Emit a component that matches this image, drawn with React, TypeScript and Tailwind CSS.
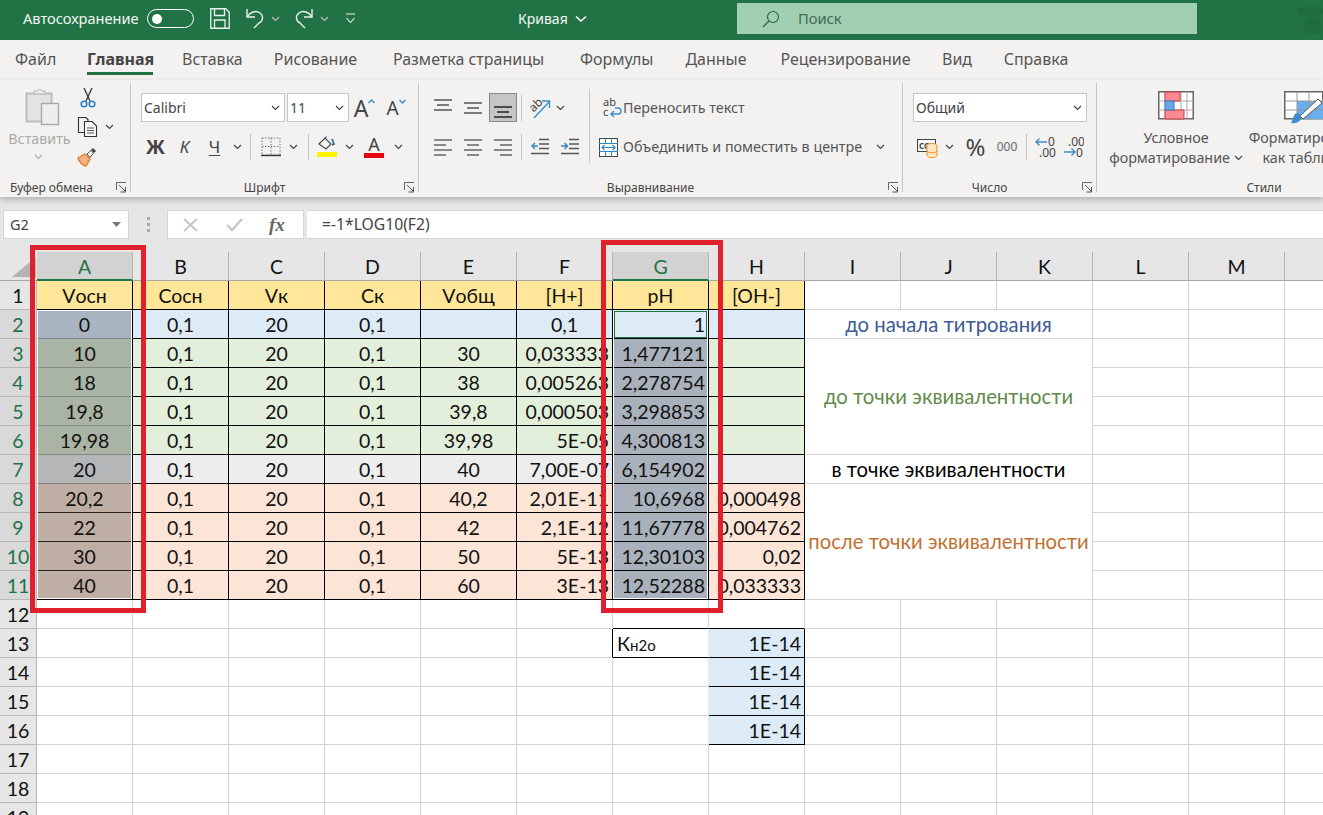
import { ReactNode } from 'react';

const tabs = [
  { label: 'Файл', w: 'w-[39px]', gap: 'ml-[15px]' },
  { label: 'Главная', w: 'w-[66px]', gap: 'ml-[33px]', active: true },
  { label: 'Вставка', w: 'w-[60px]', gap: 'ml-[29px]' },
  { label: 'Рисование', w: 'w-[85px]', gap: 'ml-[31px]' },
  { label: 'Разметка страницы', w: 'w-[153px]', gap: 'ml-[34px]' },
  { label: 'Формулы', w: 'w-[73px]', gap: 'ml-[35px]' },
  { label: 'Данные', w: 'w-[62px]', gap: 'ml-[32px]' },
  { label: 'Рецензирование', w: 'w-[133px]', gap: 'ml-[32px]' },
  { label: 'Вид', w: 'w-[30px]', gap: 'ml-[30px]' },
  { label: 'Справка', w: 'w-[66px]', gap: 'ml-[31px]' },
];

const columns = ['A', 'B', 'C', 'D', 'E', 'F', 'G', 'H', 'I', 'J', 'K', 'L', 'M', 'N'];

// values of A..H for rows 1-11, a leading '>' means right aligned
const sheet: string[][] = [
  ['Vосн', 'Сосн', 'Vк', 'Ск', 'Vобщ', '[Н+]', 'рН', '[ОН-]'],
  ['0', '0,1', '20', '0,1', '', '0,1', '>1', ''],
  ['10', '0,1', '20', '0,1', '30', '>0,033333', '>1,477121', ''],
  ['18', '0,1', '20', '0,1', '38', '>0,005263', '>2,278754', ''],
  ['19,8', '0,1', '20', '0,1', '39,8', '>0,000503', '>3,298853', ''],
  ['19,98', '0,1', '20', '0,1', '39,98', '>5E-05', '>4,300813', ''],
  ['20', '0,1', '20', '0,1', '40', '>7,00E-07', '>6,154902', ''],
  ['20,2', '0,1', '20', '0,1', '40,2', '>2,01E-11', '>10,6968', '>0,000498'],
  ['22', '0,1', '20', '0,1', '42', '>2,1E-12', '>11,67778', '>0,004762'],
  ['30', '0,1', '20', '0,1', '50', '>5E-13', '>12,30103', '>0,02'],
  ['40', '0,1', '20', '0,1', '60', '>3E-13', '>12,52288', '>0,033333'],
];

const notes: Record<number, { text: string; span: string; color: string }> = {
  2: { text: 'до начала титрования', span: 'row-span-1', color: 'text-[#3c5a94]' },
  3: { text: 'до точки эквивалентности', span: 'row-span-4', color: 'text-[#5f8a48]' },
  7: { text: 'в точке эквивалентности', span: 'row-span-1', color: 'text-black' },
  8: { text: 'после точки эквивалентности', span: 'row-span-4', color: 'text-[#c1702f]' },
};

function rowFill(row: number) {
  if (row === 1) return 'bg-[#ffe699]';
  if (row === 2) return 'bg-[#ddebf7]';
  if (row <= 6) return 'bg-[#e2efda]';
  if (row === 7) return 'bg-[#ededed]';
  return 'bg-[#fce4d6]';
}

function selectedA(row: number) {
  if (row === 2) return 'bg-[#a9b4c1] border-b-[#7f8893]';
  if (row <= 6) return 'bg-[#aab4a4] border-b-[#848c7f]';
  if (row === 7) return 'bg-[#b4b6b8] border-b-[#85807c]';
  if (row === 11) return 'bg-[#bfaea3] border-b-black';
  return 'bg-[#bfaea3] border-b-[#2a2522]';
}

function Chevron({ className = '' }: { className?: string }) {
  return (
    <svg width="9" height="6" viewBox="0 0 9 6" className={className}>
      <path d="M1 1l3.5 3.5L8 1" fill="none" stroke="#444" strokeWidth="1.2" />
    </svg>
  );
}

function Launcher() {
  return (
    <div className="w-[20px] flex justify-start pl-[6px] items-center h-[14px] mt-[2px]">
      <svg width="11" height="11" viewBox="0 0 11 11">
        <path d="M.5 8V.5H10" fill="none" stroke="#666" />
        <path d="M3 3l6 6M9.5 5v5h-5" fill="none" stroke="#555" />
      </svg>
    </div>
  );
}

function Group({ w, label, launcher = true, border = true, left = false, children }: {
  w: string; label: string; launcher?: boolean; border?: boolean; left?: boolean; children: ReactNode;
}) {
  return (
    <div className={`${w} shrink-0 h-[109px] mt-[3px] flex flex-col ${border ? 'border-r border-[#c8c6c4]' : ''}`}>
      <div className="flex-1 min-h-0">{children}</div>
      <div className="h-[14px] flex">
        <div className={`flex-1 text-[12px] leading-[20px] text-[#444] whitespace-nowrap ${left ? 'pl-[10px]' : 'text-center'}`}>{label}</div>
        {launcher && <Launcher />}
      </div>
    </div>
  );
}

function Select({ w, text, chevronPad = 'pr-[4px]' }: { w: string; text: string; chevronPad?: string }) {
  return (
    <div className={`${w} h-[29px] bg-white border border-[#c8c6c4] flex items-center justify-between pl-[2px] ${chevronPad} text-[14px] text-[#444]`}>
      <span>{text}</span>
      <Chevron />
    </div>
  );
}

function Box({ w, children, className = '' }: { w: string; children?: ReactNode; className?: string }) {
  return <div className={`${w} h-full shrink-0 flex items-center justify-center ${className}`}>{children}</div>;
}

function Sep() {
  return <div className="w-px h-[26px] bg-[#c8c6c4] shrink-0" />;
}

function Lines({ items, stroke = '#555', width = 1.5 }: { items: [number, number, number][]; stroke?: string; width?: number }) {
  return (
    <svg width="18" height="20" viewBox="0 0 18 20">
      {items.map(([a, b, y]) => (
        <line key={`${a}-${y}`} x1={a} x2={b} y1={y} y2={y} stroke={stroke} strokeWidth={width} />
      ))}
    </svg>
  );
}

function PasteIcon() {
  return (
    <svg width="35" height="38" viewBox="0 0 35 38" className="ml-[8px]">
      <rect x="1.5" y="5.5" width="25" height="28" fill="#e4e3e2" stroke="#bdbcbb" strokeWidth="2" />
      <path d="M9 6V3h3a3 3 0 0 1 5 0h3v3z" fill="#eee" stroke="#b5b4b3" />
      <rect x="16.5" y="15.5" width="17" height="21" fill="#efeeed" stroke="#a9a8a7" strokeWidth="1.4" />
    </svg>
  );
}

function ScissorsIcon() {
  return (
    <svg width="16" height="21" viewBox="0 0 16 21">
      <path d="M4 1l6 13M12 1L6 14" stroke="#333" strokeWidth="1.3" fill="none" />
      <circle cx="4" cy="17" r="2.8" fill="none" stroke="#2f7fc1" strokeWidth="1.6" />
      <circle cx="12" cy="17" r="2.8" fill="none" stroke="#2f7fc1" strokeWidth="1.6" />
    </svg>
  );
}

function CopyIcon() {
  return (
    <svg width="21" height="20" viewBox="0 0 21 20">
      <path d="M8 15.5H1.5V.5H9l2 2V5" fill="none" stroke="#333" strokeWidth="1.1" />
      <path d="M7.5 4.5H15l4.5 4.5v10.5H7.5z" fill="#f8f8f8" stroke="#333" strokeWidth="1.1" />
      <path d="M10 11h7M10 13.5h7M10 16h7" stroke="#555" />
    </svg>
  );
}

function PainterIcon() {
  return (
    <svg width="20" height="20" viewBox="0 0 20 20">
      <path d="M1 11l7-4 5 5-4 7c-3 0-7-4-8-8z" fill="#f4b183" stroke="#e07b25" strokeWidth="1.3" />
      <path d="M10 7l4-3.5 2.5 2.5-3.5 4.5z" fill="#fff" stroke="#444" />
      <path d="M14 3l2-2 3 3-2 2z" fill="#444" />
    </svg>
  );
}

function SizeA({ large, up }: { large: boolean; up: boolean }) {
  return (
    <div className="flex items-start text-[#444]">
      <span className={large ? 'text-[23px] leading-[26px]' : 'text-[19px] leading-[26px]'}>A</span>
      <svg width="7" height="5" viewBox="0 0 7 5" className="mt-[4px]">
        <path d={up ? 'M.5 4l3-3 3 3' : 'M.5 1l3 3 3-3'} fill="none" stroke="#3a8fc9" strokeWidth="1.4" />
      </svg>
    </div>
  );
}

function BorderIcon() {
  return (
    <svg width="20" height="20" viewBox="0 0 20 20">
      <rect x="1" y="1" width="18" height="17" fill="none" stroke="#777" strokeDasharray="1.5 1.5" />
      <path d="M10 1v17M1 9.5h18" stroke="#777" strokeDasharray="1.5 1.5" />
      <path d="M0 18.5h20" stroke="#333" strokeWidth="1.4" />
    </svg>
  );
}

function FillIcon() {
  return (
    <svg width="21" height="22" viewBox="0 0 21 22">
      <path d="M2 8l6-6 6 6-5 5z" fill="none" stroke="#444" strokeWidth="1.1" />
      <path d="M8 2l2-1.5" stroke="#444" />
      <path d="M15 3l2 5-2 1 2-1" stroke="#2f6f9f" strokeWidth="1.8" fill="none" />
      <rect x="0" y="16" width="20" height="5" fill="#fff200" />
    </svg>
  );
}

function ColorIcon() {
  return (
    <div className="w-[20px] flex flex-col items-center">
      <span className="text-[18px] leading-[17px] text-[#444]">A</span>
      <div className="w-[20px] h-[5px] bg-[#e60012]" />
    </div>
  );
}

function OrientationIcon() {
  return (
    <svg width="22" height="22" viewBox="0 0 22 22">
      <text x="1" y="13" fontSize="12" fill="#444" transform="rotate(-45 6 10)" fontFamily="Noto Sans">ab</text>
      <path d="M5 21L20 5M13 4h7.500v7" fill="none" stroke="#3a8fc9" strokeWidth="1.4" />
    </svg>
  );
}

function IndentIcon({ right }: { right: boolean }) {
  return (
    <svg width="18" height="18" viewBox="0 0 18 18">
      <path d="M8 1.500h10M8 6h10M8 10.500h10M0 15.500h18" stroke="#555" strokeWidth="1.3" />
      <path d={right ? 'M0 8h6M3.500 5l3 3-3 3' : 'M7 8H1M4 5L1 8l3 3'} stroke="#2f86c4" strokeWidth="1.4" fill="none" />
    </svg>
  );
}

function WrapIcon() {
  return (
    <svg width="20" height="21" viewBox="0 0 20 21" className="shrink-0">
      <text x="1" y="9" fontSize="11" fill="#444" fontFamily="Noto Sans">ab</text>
      <text x="1" y="19" fontSize="11" fill="#444" fontFamily="Noto Sans">c</text>
      <path d="M13 11h3a2.500 2.500 0 0 1 0 6H9M12 14l-3 3 3 3" fill="none" stroke="#3a8fc9" strokeWidth="1.4" />
    </svg>
  );
}

function MergeIcon() {
  return (
    <svg width="20" height="19" viewBox="0 0 20 19" className="shrink-0">
      <rect x=".5" y=".5" width="18" height="18" fill="#fff" stroke="#444" />
      <path d="M0 5.500h19M0 13.500h19M6.500 0v5M12.500 0v5M6.500 14v5M12.500 14v5" stroke="#2f86c4" />
      <path d="M3 9.500h13M5.500 7l-2.500 2.500 2.500 2.500M13.500 7l2.500 2.500-2.500 2.500" fill="none" stroke="#2f86c4" strokeWidth="1.2" />
    </svg>
  );
}

function MoneyIcon() {
  return (
    <svg width="21" height="22" viewBox="0 0 21 22">
      <rect x=".5" y="3.500" width="18" height="12" fill="#f8f8f8" stroke="#444" />
      <text x="2" y="12.500" fontSize="8" fontWeight="700" fill="#444" fontFamily="Noto Sans">CCC</text>
      <ellipse cx="15" cy="10" rx="5" ry="2.500" fill="#fde7c0" stroke="#e8962e" />
      <path d="M10 10v9c0 3.500 10 3.500 10 0v-9M10 14.500c0 3 10 3 10 0" fill="#fde7c0" stroke="#e8962e" />
    </svg>
  );
}

function DecimalIcon({ more }: { more: boolean }) {
  return (
    <svg width="21" height="24" viewBox="0 0 21 24">
      {more ? (
        <>
          <path d="M12 7H1M4.500 3.500L1 7l3.500 3.500" fill="none" stroke="#3a8fc9" strokeWidth="1.4" />
          <text x="13" y="11" fontSize="12" fill="#444" fontFamily="Noto Sans">0</text>
          <text x="4" y="22" fontSize="12" fill="#444" fontFamily="Noto Sans">.00</text>
        </>
      ) : (
        <>
          <text x="5" y="11" fontSize="12" fill="#444" fontFamily="Noto Sans">.00</text>
          <path d="M1 17h11M8.500 13.500L12 17l-3.500 3.500" fill="none" stroke="#3a8fc9" strokeWidth="1.4" />
          <text x="13" y="22" fontSize="12" fill="#444" fontFamily="Noto Sans">0</text>
        </>
      )}
    </svg>
  );
}

function CondFormatIcon() {
  return (
    <svg width="36" height="29" viewBox="0 0 36 29">
      <rect x=".75" y=".75" width="34.500" height="27" fill="#fff" stroke="#666" strokeWidth="1.5" />
      <path d="M7 1v27M23 1v27M29 1v27M1 10h34M1 19h34" stroke="#aaa" />
      <path d="M7 1h15v9H7zM7 19h19v9H7z" fill="#fb8a94" stroke="#d13b47" />
      <rect x="7" y="10" width="9" height="9" fill="#6aa5e6" stroke="#3e7cc0" />
    </svg>
  );
}

function TableFormatIcon() {
  return (
    <svg width="40" height="34" viewBox="0 0 40 34">
      <rect x=".75" y=".75" width="38" height="27" fill="#fff" stroke="#666" strokeWidth="1.5" />
      <path d="M13 10h26v18H13z" fill="#69aeee" />
      <path d="M13 1v27M25 1v27M1 10h38M1 19h38" stroke="#999" />
      <path d="M34 8L16 25l3 3L38 12z" fill="#fff" stroke="#555" />
      <path d="M11 23c3-2 6 1 6 4s-5 6-10 5c2-2 2-7 4-9z" fill="#3d8bd1" />
    </svg>
  );
}

function TitleBar() {
  return (
    <div className="h-[40px] pb-[3px] bg-[#217346] flex items-center text-white shrink-0">
      <span className="ml-[23px] w-[116px] shrink-0 text-[14.600px] text-[#f1f8f3] whitespace-nowrap">Автосохранение</span>
      <div className="ml-[8px] w-[47px] h-[19px] rounded-full border-[1.5px] border-white flex items-center pl-[4px] shrink-0">
        <div className="w-[10px] h-[10px] rounded-full bg-white" />
      </div>
      <svg width="20" height="21" viewBox="0 0 20 21" className="ml-[16px] shrink-0">
        <path d="M.75.75h15l3.500 3.500v16H.75z" fill="none" stroke="#e8f3ec" strokeWidth="1.3" />
        <path d="M4.500 1v6.500h10V1M4.500 20v-8h10.500v8" fill="none" stroke="#e8f3ec" strokeWidth="1.3" />
      </svg>
      <svg width="20" height="21" viewBox="0 0 20 21" className="ml-[15px] shrink-0">
        <path d="M2 1v8h8" fill="none" stroke="#e8f3ec" strokeWidth="1.4" />
        <path d="M2 9C5 4 11 2 15 5c4 3 3 8-1 10l-5 5" fill="none" stroke="#e8f3ec" strokeWidth="1.4" />
      </svg>
      <Chevron className="ml-[6px] shrink-0 invert" />
      <svg width="20" height="21" viewBox="0 0 20 21" className="ml-[14px] shrink-0">
        <path d="M18 1v8h-8" fill="none" stroke="#e8f3ec" strokeWidth="1.4" />
        <path d="M18 9C15 4 9 2 5 5c-4 3-3 8 1 10l5 5" fill="none" stroke="#e8f3ec" strokeWidth="1.4" />
      </svg>
      <Chevron className="ml-[6px] shrink-0 invert" />
      <svg width="11" height="11" viewBox="0 0 11 11" className="ml-[16px] shrink-0">
        <path d="M1 1h9M1.500 5l4 4.500 4-4.500" fill="none" stroke="#e8f3ec" strokeWidth="1.1" />
      </svg>
      <span className="ml-[162px] w-[50px] shrink-0 text-[14px] text-[#f1f8f3] whitespace-nowrap">Кривая</span>
      <svg width="12" height="8" viewBox="0 0 12 8" className="ml-[7px] shrink-0">
        <path d="M1 1.500l5 4.500 5-4.500" fill="none" stroke="#fff" strokeWidth="1.6" />
      </svg>
      <div className="ml-[150px] w-[460px] h-[31px] bg-[#a0cfb2] flex items-center shrink-0">
        <svg width="18" height="18" viewBox="0 0 18 18" className="ml-[25px]">
          <circle cx="11" cy="7" r="5.500" fill="none" stroke="#2f6a47" strokeWidth="1.2" />
          <path d="M7 11l-6 6" stroke="#2f6a47" strokeWidth="1.4" />
        </svg>
        <span className="ml-[18px] text-[14.700px] text-[#3f6a50]">Поиск</span>
      </div>
      <svg width="28" height="30" viewBox="0 0 28 30" className="ml-[98px] shrink-0 opacity-40">
        <circle cx="18" cy="22" r="9" fill="#1b6239" />
        <rect x="2" y="3" width="26" height="8" rx="3" fill="#1b6239" />
      </svg>
    </div>
  );
}

function TabBar() {
  return (
    <div className="h-[40px] bg-[#f3f2f1] flex items-start shrink-0">
      {tabs.map((t) => (
        <div key={t.label} className={`${t.gap} ${t.w} shrink-0 h-[35px] pt-[8px] text-center whitespace-nowrap text-[16px] leading-[22px] ${t.active ? 'font-bold text-[#444] border-b-[3px] border-[#217346]' : 'text-[#555]'}`}>
          {t.label}
        </div>
      ))}
    </div>
  );
}

function Ribbon() {
  return (
    <div className="relative z-10 h-[117px] bg-[#f3f2f1] flex shrink-0 shadow-[0_3px_6px_rgba(0,0,0,0.22)]">
      <Group w="w-[131px]" label="Буфер обмена" left>
        <div className="flex">
          <div className="w-[77px] flex flex-col items-center pt-[5px]">
            <PasteIcon />
            <span className="text-[14.300px] leading-[20px] mt-[3px] text-[#aaa] whitespace-nowrap pl-[2px]">Вставить</span>
            <Chevron className="mt-[5px] opacity-40" />
          </div>
          <div className="flex flex-col pt-[4px]">
            <div className="pl-[3px]"><ScissorsIcon /></div>
            <div className="flex items-center mt-[9px]">
              <CopyIcon />
              <Chevron className="ml-[7px]" />
            </div>
            <div className="mt-[10px]"><PainterIcon /></div>
          </div>
        </div>
      </Group>

      <Group w="w-[288px]" label="Шрифт">
        <div className="pl-[10px] pt-[10px]">
          <div className="flex h-[29px] items-center">
            <Select w="w-[144px]" text="Calibri" />
            <Select w="w-[62px] ml-[2px]" text="11" />
            <Box w="w-[31px]"><SizeA large up /></Box>
            <Box w="w-[32px]"><SizeA large={false} up={false} /></Box>
          </div>
          <div className="flex h-[28px] mt-[11px] items-center text-[#444]">
            <Box w="w-[29px]"><span className="text-[19px] font-bold">Ж</span></Box>
            <Box w="w-[29px]"><span className="text-[17px] italic">К</span></Box>
            <Box w="w-[31px]"><span className="text-[17px] underline underline-offset-2">Ч</span></Box>
            <Box w="w-[15px]"><Chevron /></Box>
            <Box w="w-[11px]"><Sep /></Box>
            <Box w="w-[29px]"><BorderIcon /></Box>
            <Box w="w-[16px]"><Chevron /></Box>
            <Box w="w-[14px]"><Sep /></Box>
            <Box w="w-[25px]"><FillIcon /></Box>
            <Box w="w-[18px]"><Chevron /></Box>
            <Box w="w-[32px]"><ColorIcon /></Box>
            <Box w="w-[16px]"><Chevron /></Box>
          </div>
        </div>
      </Group>

      <Group w="w-[484px]" label="Выравнивание">
        <div className="flex pl-[9px]">
          <div className="pt-[10px]">
            <div className="flex h-[29px]">
              <Box w="w-[30px]"><Lines items={[[0, 18, 2], [3, 15, 7], [0, 18, 12]]} /></Box>
              <Box w="w-[30px]"><Lines items={[[0, 18, 5], [3, 15, 10], [0, 18, 15]]} /></Box>
              <Box w="w-[28px] ml-[1px] bg-[#c8c6c4] border border-[#8a8886]"><Lines items={[[0, 18, 9], [3, 15, 14], [0, 18, 19]]} stroke="#222" /></Box>
              <Box w="w-[8px]"><Sep /></Box>
              <Box w="w-[30px]"><OrientationIcon /></Box>
              <Box w="w-[10px]"><Chevron /></Box>
            </div>
            <div className="flex h-[28px] mt-[11px]">
              <Box w="w-[30px]"><Lines items={[[0, 18, 3], [0, 12, 8], [0, 18, 13], [0, 12, 18]]} stroke="#666" /></Box>
              <Box w="w-[30px]"><Lines items={[[0, 18, 3], [3, 15, 8], [0, 18, 13], [3, 15, 18]]} stroke="#666" /></Box>
              <Box w="w-[30px]"><Lines items={[[0, 18, 3], [6, 18, 8], [0, 18, 13], [6, 18, 18]]} stroke="#666" /></Box>
              <Box w="w-[6px]"><Sep /></Box>
              <Box w="w-[31px]"><IndentIcon right={false} /></Box>
              <Box w="w-[30px]"><IndentIcon right /></Box>
            </div>
          </div>
          <div className="w-px h-[74px] mt-[6px] bg-[#c8c6c4] ml-[4px]" />
          <div className="pt-[10px] text-[14.300px] text-[#555] whitespace-nowrap">
            <div className="flex h-[29px] items-center pl-[12px]">
              <WrapIcon />
              <span className="ml-[1px]">Переносить текст</span>
            </div>
            <div className="flex h-[28px] mt-[11px] items-center pl-[9px]">
              <MergeIcon />
              <span className="ml-[4px] w-[241px]">Объединить и поместить в центре</span>
              <Chevron className="ml-[12px]" />
            </div>
          </div>
        </div>
      </Group>

      <Group w="w-[194px]" label="Число">
        <div className="pl-[10px] pt-[10px]">
          <Select w="w-[174px]" text="Общий" />
          <div className="flex h-[28px] mt-[11px] items-center text-[#444]">
            <Box w="w-[29px]"><MoneyIcon /></Box>
            <Box w="w-[14px]"><Chevron /></Box>
            <Box w="w-[33px] ml-[3px]"><span className="text-[24px] leading-[28px]">%</span></Box>
            <Box w="w-[30px]"><span className="text-[12px] text-[#666]">000</span></Box>
            <Box w="w-[9px]"><Sep /></Box>
            <Box w="w-[28px]"><DecimalIcon more /></Box>
            <Box w="w-[29px]"><DecimalIcon more={false} /></Box>
          </div>
        </div>
      </Group>

      <Group w="w-[334px]" label="Стили" launcher={false} border={false}>
        <div className="flex text-[14.300px] leading-[20px] text-[#555] whitespace-nowrap pl-[16px]">
          <div className="w-[126px] flex flex-col items-center pt-[8px]">
            <CondFormatIcon />
            <span className="mt-[8px]">Условное</span>
            <span className="flex items-center">форматирование<Chevron className="ml-[4px]" /></span>
          </div>
          <div className="ml-[6px] w-[118px] flex flex-col items-center pt-[8px]">
            <TableFormatIcon />
            <span className="mt-[3px]">Форматировать</span>
            <span>как таблицу</span>
          </div>
        </div>
      </Group>
    </div>
  );
}

function FormulaBar() {
  return (
    <div className="h-[55px] pt-[13px] bg-[#e6e6e6] flex shrink-0 text-[#444]">
      <div className="ml-[3px] w-[126px] h-[29px] bg-white border border-[#d6d6d6] flex items-center justify-between pl-[6px] pr-[7px] text-[14.500px]">
        <span>G2</span>
        <svg width="9" height="5" viewBox="0 0 9 5"><path d="M0 0h9L4.500 5z" fill="#777" /></svg>
      </div>
      <div className="w-[38px] h-[29px] flex flex-col items-center justify-center gap-[3px]">
        <div className="w-[3px] h-[3px] bg-[#a9a9a9]" />
        <div className="w-[3px] h-[3px] bg-[#a9a9a9]" />
        <div className="w-[3px] h-[3px] bg-[#a9a9a9]" />
      </div>
      <div className="w-[137px] h-[29px] bg-white border border-[#d6d6d6] flex items-center">
        <svg width="15" height="14" viewBox="0 0 15 14" className="ml-[15px]">
          <path d="M1 1l13 12M14 1L1 13" stroke="#c6c6c6" strokeWidth="2" />
        </svg>
        <svg width="17" height="14" viewBox="0 0 17 14" className="ml-[28px]">
          <path d="M1 7l5 5L16 1" fill="none" stroke="#c6c6c6" strokeWidth="2.400" />
        </svg>
        <span className="ml-[26px] font-['Liberation_Serif',serif] italic font-bold text-[19px] leading-none text-[#666]">fx</span>
      </div>
      <div className="ml-[3px] flex-1 h-[29px] bg-white border-y border-[#d6d6d6] flex items-center pl-[15px] text-[15.700px]">
        =-1*LOG10(F2)
      </div>
    </div>
  );
}

function DataCell({ row, col }: { row: number; col: number }) {
  const raw = row <= 11 ? sheet[row - 1][col] : '';
  const right = raw.startsWith('>');
  const text = right ? raw.slice(1) : raw;
  let fill = rowFill(row);
  let line = 'border-black';
  if (col === 0 && row > 1) fill = selectedA(row);
  if (col === 6 && row > 2) fill = 'bg-[#a9b1bd]';
  if (col === 0 && row > 1) line = 'border-r-black';
  return (
    <div className={`h-[29px] pt-[1px] border-r border-b overflow-hidden flex items-center whitespace-nowrap ${fill} ${line} ${right ? 'justify-end pr-[3px]' : 'justify-center'}`}>
      {text}
    </div>
  );
}

function PlainCell({ row, col }: { row: number; col: number }) {
  const blue = col === 7 && row >= 13 && row <= 16;
  let cls = 'border-r border-b border-[#d4d4d4]';
  if (row === 12 && (col === 6 || col === 7)) cls = 'border-r border-b border-r-[#d4d4d4] border-b-black';
  if (row === 13 && col === 5) cls = 'border-r border-b border-r-black border-b-[#d4d4d4]';
  if (row === 13 && col === 6) cls = 'border-r border-b border-r-[#ddebf7] border-b-black';
  if (row > 13 && row <= 16 && col === 6) cls = 'border-r border-b border-r-[#ddebf7] border-b-[#d4d4d4]';
  if (blue) cls = 'border-r border-b border-black bg-[#ddebf7]';
  return (
    <div className={`h-[29px] pt-[1px] overflow-hidden flex items-center ${cls} ${blue ? 'justify-end pr-[3px]' : ''}`}>
      {blue && '1E-14'}
      {row === 13 && col === 6 && (
        <span className="pl-[4px]">К<span className="text-[15px]">н2о</span></span>
      )}
    </div>
  );
}

function Sheet() {
  const rows = Array.from({ length: 19 }, (_, i) => i + 1);
  return (
    <div className="flex-1 min-h-0 overflow-hidden font-['Lato',sans-serif] text-[19.500px] text-[#111]">
      <div className="grid grid-cols-[37px_repeat(14,96px)] auto-rows-[29px]">
        <div className="h-[29px] bg-[#e6e6e6] border-b border-[#a6a6a6] flex items-end justify-end pr-[1px] pb-[3px]">
          <svg width="24" height="20" viewBox="0 0 24 20"><path d="M24 0v20H0z" fill="#b4b4b4" /></svg>
        </div>
        {columns.map((c) => (
          <div key={c} className={`h-[29px] pt-[2px] flex items-center justify-center border-r border-[#b5b5b5] ${c === 'A' || c === 'G' ? 'bg-[#d2d2d2] text-[#217346] border-b-2 border-b-[#217346]' : 'bg-[#e6e6e6] border-b border-b-[#a6a6a6]'}`}>
            {c}
          </div>
        ))}
        {rows.map((row) => (
          <Row key={row} row={row} />
        ))}
      </div>
    </div>
  );
}

function Row({ row }: { row: number }) {
  const selected = row >= 2 && row <= 11;
  const note = notes[row];
  return (
    <>
      <div className={`h-[29px] pt-[1px] flex items-center justify-center border-b border-r ${selected ? 'bg-[#d9d9d9] text-[#217346] border-[#b8b8b8]' : 'bg-[#e6e6e6] border-[#b8b8b8]'}`}>
        {row}
      </div>
      {columns.map((_, col) => {
        if (row <= 11 && col < 8) return <DataCell key={col} row={row} col={col} />;
        if (selected && col >= 8 && col <= 10) {
          if (col === 8 && note) {
            return (
              <div key={col} className={`col-span-3 ${note.span} border-r border-b border-[#d4d4d4] bg-white flex items-center justify-center whitespace-nowrap text-[20.300px] ${note.color}`}>
                {note.text}
              </div>
            );
          }
          return null;
        }
        return <PlainCell key={col} row={row} col={col} />;
      })}
    </>
  );
}

export default function App() {
  return (
    <div className="relative w-[1323px] h-[815px] overflow-hidden bg-white flex flex-col font-['Noto_Sans',sans-serif]">
      <TitleBar />
      <TabBar />
      <Ribbon />
      <FormulaBar />
      <Sheet />

      {/* selection frames and the red marks drawn over the sheet */}
      <div className="absolute left-[37px] top-[310px] w-[95px] h-[289px] border-[1.5px] border-white" />
      <div className="absolute left-[613px] top-[310px] w-[95px] h-[289px] border-x-[1.5px] border-b-[1.5px] border-white" />
      <div className="absolute left-[614px] top-[311px] w-[93px] h-[27px] border-[1.5px] border-[#217346]" />
      <div className="absolute left-[30px] top-[245px] w-[116px] h-[368px] border-[5px] border-[#e21f2d]" />
      <div className="absolute left-[601px] top-[240px] w-[122px] h-[373px] border-[5px] border-[#e21f2d]" />
    </div>
  );
}
